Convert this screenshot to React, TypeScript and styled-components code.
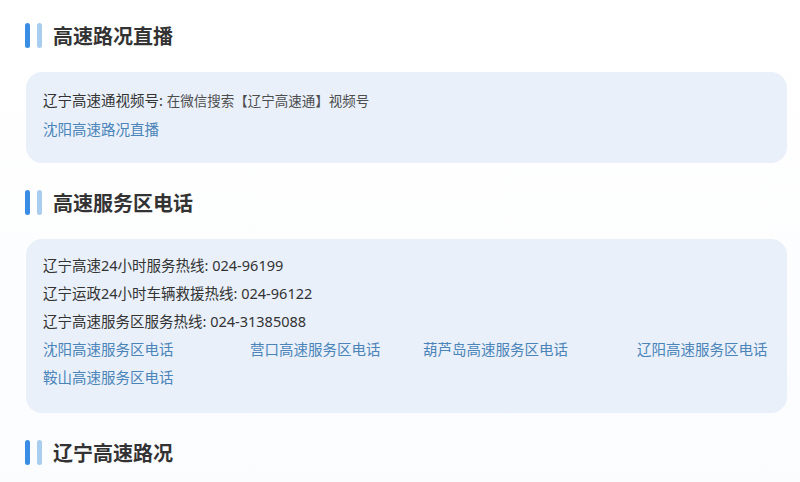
import React from "react";
import styled, { createGlobalStyle } from "styled-components";

const GlobalStyle = createGlobalStyle`
  body {
    margin: 0;
    background: #ffffff;
    font-family: "Noto Sans", "Noto Sans CJK SC", sans-serif;
  }
`;

const Page = styled.div`
  width: 800px;
  height: 482px;
  overflow: hidden;
  box-sizing: border-box;
  padding: 23px 13px 0 25px;
  background: linear-gradient(180deg, #ffffff 0%, #fbfcfe 100%);
`;

const Section = styled.section`
  margin-bottom: 27px;
`;

const Heading = styled.div`
  display: flex;
  align-items: center;
  height: 25px;
  margin-bottom: 24px;
`;

const Bar = styled.span<{ $light?: boolean }>`
  width: 5px;
  height: 25px;
  border-radius: 3px;
  background: ${(p) => (p.$light ? "#a8cdef" : "#3a8de4")};
  margin-right: ${(p) => (p.$light ? "11px" : "7px")};
`;

const Title = styled.h2`
  margin: 0;
  font-family: "Noto Sans CJK SC", sans-serif;
  font-size: 20px;
  font-weight: 700;
  color: #333333;
  line-height: 25px;
`;

const Card = styled.div<{ $padTop: number; $padBottom: number }>`
  margin-left: 1px;
  background: #e9f0fa;
  border-radius: 16px;
  padding: ${(p) => p.$padTop}px 17px ${(p) => p.$padBottom}px;
`;

const Line = styled.div`
  font-size: 14.5px;
  line-height: 28px;
  color: #333333;
  white-space: nowrap;
`;

const Value = styled.span`
  font-size: 13.5px;
  color: #4d4d4d;
`;

const Link = styled.a`
  font-size: 14.5px;
  line-height: 28px;
  color: #4a84b8;
  text-decoration: none;
  white-space: nowrap;
`;

const LinkGrid = styled.div`
  display: grid;
  grid-template-columns: 207px 173px 214px auto;
`;

const links = [
  "沈阳高速服务区电话",
  "营口高速服务区电话",
  "葫芦岛高速服务区电话",
  "辽阳高速服务区电话",
  "鞍山高速服务区电话",
];

function SectionHeading({ title }: { title: string }) {
  return (
    <Heading>
      <Bar />
      <Bar $light />
      <Title>{title}</Title>
    </Heading>
  );
}

export default function App() {
  return (
    <>
      <GlobalStyle />
      <Page>
        <Section>
          <SectionHeading title="高速路况直播" />
          <Card $padTop={14} $padBottom={20}>
            <Line>
              辽宁高速通视频号: <Value>在微信搜索【辽宁高速通】视频号</Value>
            </Line>
            <Line>
              <Link href="#">沈阳高速路况直播</Link>
            </Line>
          </Card>
        </Section>
        <Section>
          <SectionHeading title="高速服务区电话" />
          <Card $padTop={12} $padBottom={22}>
            <Line>辽宁高速24小时服务热线: 024-96199</Line>
            <Line>辽宁运政24小时车辆救援热线: 024-96122</Line>
            <Line>辽宁高速服务区服务热线: 024-31385088</Line>
            <LinkGrid>
              {links.map((l) => (
                <Link key={l} href="#">
                  {l}
                </Link>
              ))}
            </LinkGrid>
          </Card>
        </Section>
        <Section>
          <SectionHeading title="辽宁高速路况" />
        </Section>
      </Page>
    </>
  );
}
